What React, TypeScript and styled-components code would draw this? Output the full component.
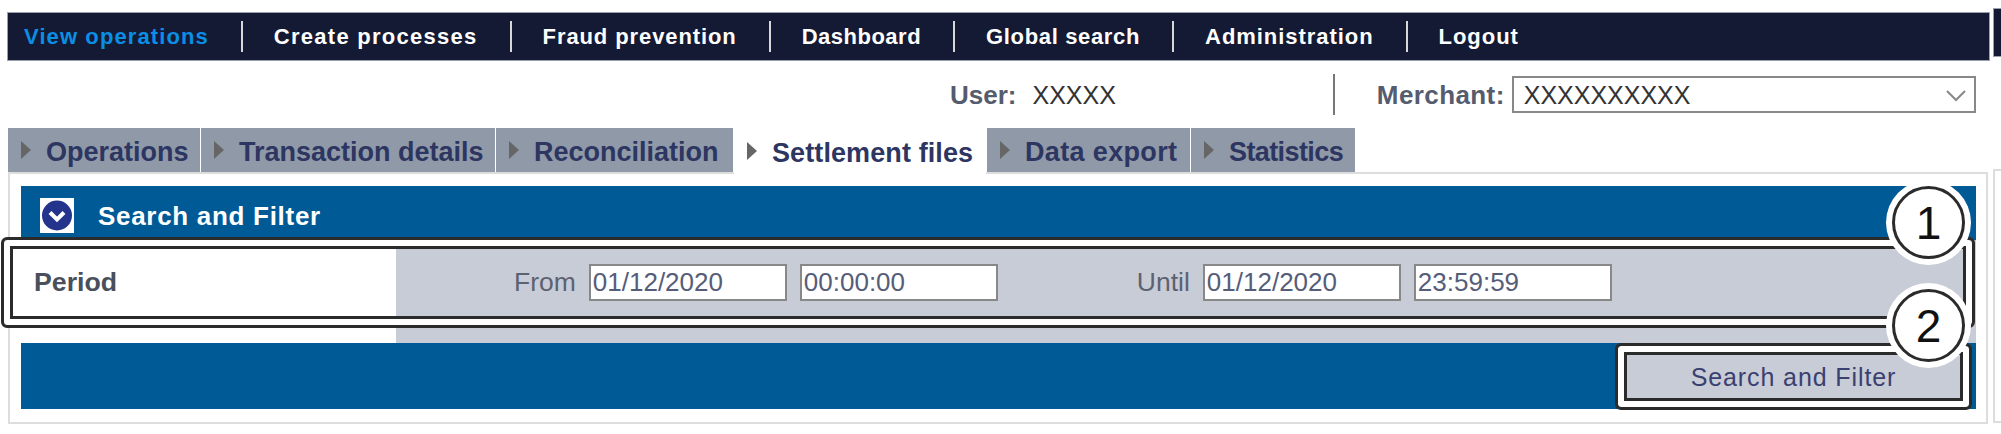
import { createGlobalStyle, styled } from 'styled-components';

const GlobalStyle = createGlobalStyle`
  html, body {
    margin: 0;
    background: #fff;
    font-family: "Liberation Sans", Arial, sans-serif;
  }
`

const Page = styled.div`
  position: relative;
  width: 2001px;
  height: 434px;
  overflow: hidden;
  padding-top: 12px;
  box-sizing: border-box;
`
const NavBar = styled.nav`
  display: flex;
  align-items: center;
  box-sizing: border-box;
  width: 1983px;
  height: 49px;
  margin-left: 7px;
  padding-left: 16px;
  background: #141a33;
  border: 1px solid #9aa0ad;
`
const NavItem = styled.a<{ $active?: boolean; $first?: boolean; $spacing: number }>`
  padding: 0 32px 0 ${(p) => (p.$first ? '0' : '31px')};
  height: 31px;
  line-height: 31px;
  color: ${(p) => (p.$active ? '#0a8fe6' : '#fff')};
  font-size: 22px;
  font-weight: 700;
  letter-spacing: ${(p) => p.$spacing}px;
  border-left: ${(p) => (p.$first ? 'none' : '2px solid #d8d8d8')};
`
const SideStub = styled.div`
  position: absolute;
  left: 1993px;
  top: 8px;
  width: 8px;
  height: 49px;
  box-sizing: border-box;
  background: #141a33;
  border: 1px solid #9aa0ad;
  border-right: none;
`
// edge of the next panel, cut off by the side of the screenshot
const SideFrame = styled.div`
  position: absolute;
  left: 1993px;
  top: 169px;
  width: 8px;
  height: 254px;
  box-sizing: border-box;
  border: 2px solid #ddd;
  border-right: none;
`
const UserBar = styled.div`
  display: flex;
  align-items: center;
  height: 67px;
  padding-left: 950px;
  color: #333;
  font-size: 25px;
`
const FieldLabel = styled.span<{ $spacing?: number }>`
  margin-top: 2px;
  font-weight: 700;
  font-size: 26px;
  letter-spacing: ${(p) => p.$spacing ?? 0}px;
  color: #555c6e;
`
const UserName = styled.span`
  margin: 2px 0 0 16px;
`
const Divider = styled.div`
  width: 2px;
  height: 41px;
  margin: 0 42px 0 217px;
  background: #777;
`
const SelectBox = styled.div`
  display: flex;
  align-items: center;
  justify-content: space-between;
  box-sizing: border-box;
  width: 464px;
  height: 37px;
  margin-left: 7px;
  padding: 2px 8px 0 10px;
  border: 2px solid #888;
  color: #333;
`
const SelectChevron = styled.svg`
  width: 20px;
  height: 12px;
  fill: none;
  stroke: #888;
  stroke-width: 2;
`
const Tabs = styled.div`
  position: relative;
  z-index: 1;
  display: flex;
  gap: 1px;
  height: 44px;
  margin-left: 8px;
`
const Tab = styled.div<{ $active?: boolean; $width: number; $spacing: number }>`
  display: flex;
  align-items: center;
  gap: 14px;
  box-sizing: border-box;
  width: ${(p) => p.$width}px;
  height: ${(p) => (p.$active ? '46px' : '44px')};
  padding: 5px 0 0 13px;
  background: ${(p) => (p.$active ? '#fff' : '#8f99a8')};
  color: #2d3561;
  font-size: 27px;
  font-weight: 700;
  letter-spacing: ${(p) => p.$spacing}px;
  white-space: nowrap;
`
const TabArrow = styled.span`
  width: 0;
  height: 0;
  margin: 0 1px 6px 0;
  border-left: 10px solid #666;
  border-top: 9px solid transparent;
  border-bottom: 9px solid transparent;
`
const Panel = styled.section`
  box-sizing: border-box;
  width: 1980px;
  height: 252px;
  margin-left: 8px;
  padding: 12px 10px 0 11px;
  border: 2px solid #ddd;
`
const PanelHeader = styled.header`
  display: flex;
  align-items: center;
  gap: 24px;
  box-sizing: border-box;
  height: 54px;
  padding: 5px 0 0 19px;
  background: #005a96;
  color: #fff;
  font-size: 26px;
  font-weight: 700;
  letter-spacing: 0.7px;
`
const HeaderTitle = styled.span`
  margin-top: 2px;
`
const CollapseIcon = styled.svg`
  width: 34px;
  height: 35px;
  background: #fff;
`
const PeriodRow = styled.div`
  position: relative;
  display: grid;
  grid-template-columns: 375px 1fr;
  height: 103px;
`
const PeriodLabel = styled.div`
  padding: 27px 0 0 13px;
  color: #4a4f5c;
  font-size: 26.7px;
  font-weight: 700;
`
const PeriodFields = styled.div`
  display: flex;
  align-items: flex-start;
  padding: 24px 0 0 118px;
  background: #c8ccd6;
`
const FieldGroup = styled.div`
  display: flex;
  align-items: center;
  gap: 13px;
  margin-right: 139px;
  color: #5c6272;
  font-size: 26.5px;
`
const DateInput = styled.input`
  box-sizing: border-box;
  width: 198px;
  height: 37px;
  padding: 0 0 0 2px;
  background: #fff;
  border: 2px solid #888;
  border-radius: 0;
  outline: none;
  color: #565d78;
  font-family: inherit;
  font-size: 26px;
`
const PanelFooter = styled.div`
  display: flex;
  justify-content: flex-end;
  align-items: flex-start;
  height: 66px;
  padding: 8px 12px 0 0;
  box-sizing: border-box;
  background: #005a96;
`
const SubmitWrap = styled.div`
  position: relative;
`
const SubmitButton = styled.button`
  display: block;
  width: 341px;
  height: 51px;
  padding-top: 3px;
  background: #c8ccd6;
  border: none;
  color: #3a4070;
  font-family: inherit;
  font-size: 25px;
  letter-spacing: 0.9px;
`
// double frame drawn over the highlighted parts of the screenshot
const Callout = styled.div<{ $target: 'row' | 'button' }>`
  position: absolute;
  box-sizing: border-box;
  pointer-events: none;
  border: 3px solid #2b2b2b;
  border-radius: 6px;
  box-shadow: inset 0 0 0 6px #fff, inset 0 0 0 9px #2b2b2b;
  ${(p) =>
    p.$target === 'row'
      ? 'left: -20px; right: 1px; top: -3px; height: 91px;'
      : 'left: -8px; right: -8px; top: -8px; bottom: -8px;'}
`
const Badge = styled.div<{ $top: number }>`
  position: absolute;
  z-index: 2;
  left: 1892px;
  top: ${(p) => p.$top}px;
  display: flex;
  align-items: center;
  justify-content: center;
  box-sizing: border-box;
  width: 73px;
  height: 73px;
  background: #fff;
  border: 3px solid #2b2b2b;
  border-radius: 50%;
  box-shadow: 0 0 0 6px #fff;
  color: #111;
  font-size: 46px;
`

const navItems = [
  { label: 'View operations', spacing: 1.1 },
  { label: 'Create processes', spacing: 1.27 },
  { label: 'Fraud prevention', spacing: 0.9 },
  { label: 'Dashboard', spacing: 0.5 },
  { label: 'Global search', spacing: 0.65 },
  { label: 'Administration', spacing: 0.95 },
  { label: 'Logout', spacing: 0.95 },
]
const tabs = [
  { label: 'Operations', width: 192, spacing: 0 },
  { label: 'Transaction details', width: 294, spacing: 0 },
  { label: 'Reconciliation', width: 237, spacing: 0 },
  { label: 'Settlement files', width: 252, spacing: 0.1, active: true },
  { label: 'Data export', width: 203, spacing: 0.35 },
  { label: 'Statistics', width: 164, spacing: -0.6 },
]

export default function App() {
  return (
    <Page>
      <GlobalStyle />
      <NavBar>
        {navItems.map((item, i) => (
          <NavItem key={item.label} $first={i === 0} $active={i === 0} $spacing={item.spacing}>{item.label}</NavItem>
        ))}
      </NavBar>
      <SideStub />
      <SideFrame />
      <UserBar>
        <FieldLabel>User:</FieldLabel>
        <UserName>XXXXX</UserName>
        <Divider />
        <FieldLabel $spacing={0.4}>Merchant:</FieldLabel>
        <SelectBox>
          XXXXXXXXXX
          <SelectChevron viewBox="0 0 20 12">
            <path d="M1 1 L10 10 L19 1" />
          </SelectChevron>
        </SelectBox>
      </UserBar>
      <Tabs>
        {tabs.map((tab) => (
          <Tab key={tab.label} $active={tab.active} $width={tab.width} $spacing={tab.spacing}>
            <TabArrow />
            {tab.label}
          </Tab>
        ))}
      </Tabs>
      <Panel>
        <PanelHeader>
          <CollapseIcon viewBox="0 0 34 35">
            <circle cx="17" cy="17.5" r="15" fill="#24348c" />
            <path d="M10 14.5 L17 21.5 L24 14.5" fill="none" stroke="#fff" strokeWidth="4" />
          </CollapseIcon>
          <HeaderTitle>Search and Filter</HeaderTitle>
        </PanelHeader>
        <PeriodRow>
          <PeriodLabel>Period</PeriodLabel>
          <PeriodFields>
            <FieldGroup>
              From
              <DateInput readOnly value="01/12/2020" />
              <DateInput readOnly value="00:00:00" />
            </FieldGroup>
            <FieldGroup>
              Until
              <DateInput readOnly value="01/12/2020" />
              <DateInput readOnly value="23:59:59" />
            </FieldGroup>
          </PeriodFields>
          <Callout $target="row" />
        </PeriodRow>
        <PanelFooter>
          <SubmitWrap>
            <SubmitButton>Search and Filter</SubmitButton>
            <Callout $target="button" />
          </SubmitWrap>
        </PanelFooter>
      </Panel>
      <Badge $top={186}>1</Badge>
      <Badge $top={289}>2</Badge>
    </Page>
  )
}
